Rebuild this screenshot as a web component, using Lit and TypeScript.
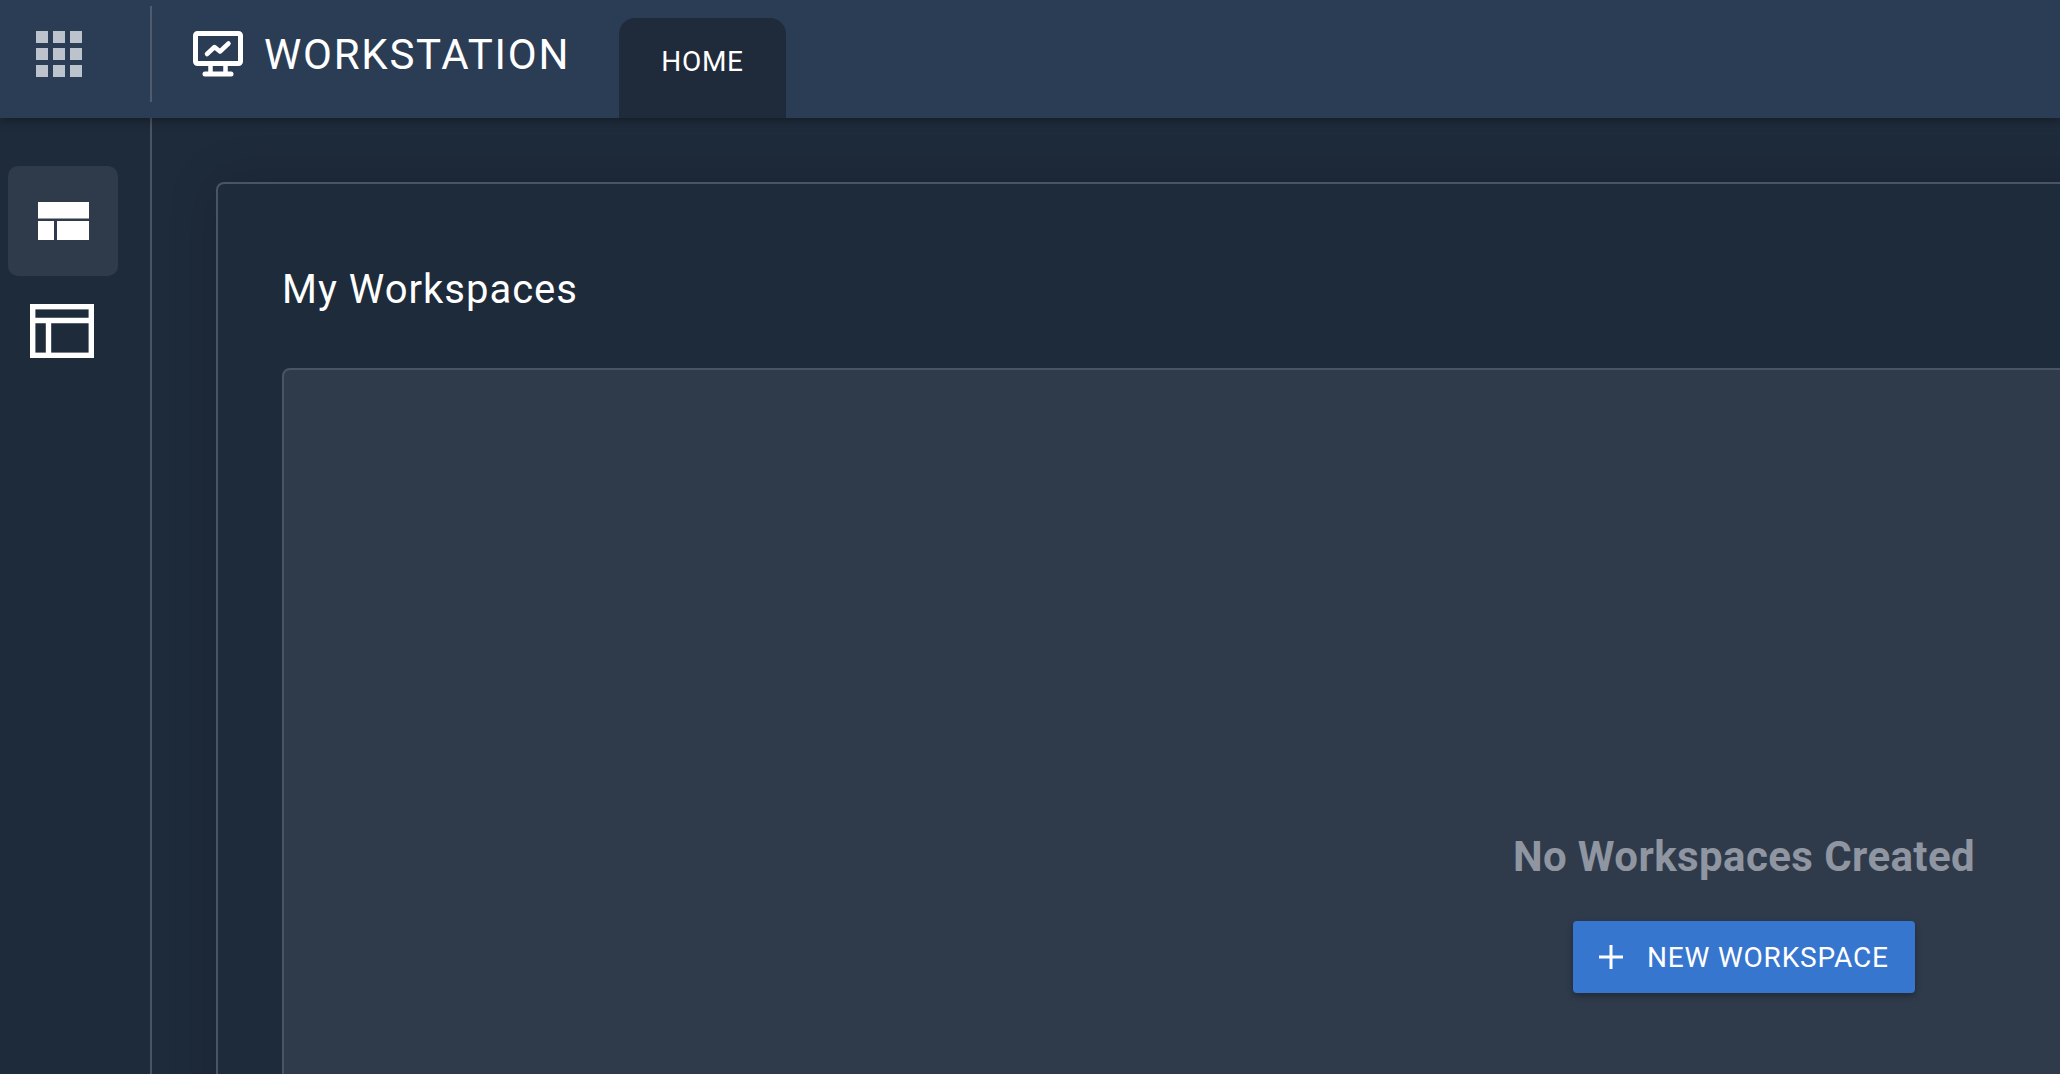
import { LitElement, html, css, svg } from 'lit';
import { customElement } from 'lit/decorators.js';

@customElement('app-root')
export class AppRoot extends LitElement {
  private _renderHeader() {
    return html`
      <header class="header">
        <div class="launcher">
          <svg width="46" height="46" viewBox="0 0 46 46" fill="#bcc3cc">
            ${[0, 17, 34].map(y => [0, 17, 34].map(x => svg`<rect x=${x} y=${y} width="12" height="12"></rect>`))}
          </svg>
        </div>
        <div class="brand">
          <svg class="brand-icon" width="50" height="46" viewBox="0 0 50 46" fill="none" stroke="#fff" stroke-width="5" stroke-linecap="round" stroke-linejoin="round">
            <rect x="2.500" y="2.500" width="45" height="30" rx="2"></rect>
            <path d="M17.500 35v7M32.500 35v7" stroke-width="4.500"></path>
            <path d="M12 43h26"></path>
            <path d="M14 23l7.500-7 5.500 4.500 8.500-8" stroke-width="4.500"></path>
          </svg>
          <span class="brand-title">WORKSTATION</span>
        </div>
        <div class="tab">HOME</div>
      </header>
    `;
  }

  private _renderSidebar() {
    return html`
      <nav class="sidebar">
        <button class="nav-item active">
          <svg width="51" height="38" viewBox="0 0 51 38" fill="#fff">
            <rect width="51" height="16.500"></rect>
            <rect y="19" width="16" height="19"></rect>
            <rect x="19" y="19" width="32" height="19"></rect>
          </svg>
        </button>
        <button class="nav-item">
          <svg class="layout-icon" width="64" height="54" viewBox="0 0 64 54" fill="none" stroke="#fff" stroke-width="5.400">
            <rect x="2.700" y="2.700" width="58.600" height="48.600"></rect>
            <path d="M0 16.500h64M18.500 16.500v37"></path>
          </svg>
        </button>
      </nav>
    `;
  }

  override render() {
    return html`
      ${this._renderHeader()}
      <div class="body">
        ${this._renderSidebar()}
        <main class="main">
          <section class="card">
            <h2 class="card-title">My Workspaces</h2>
            <div class="panel">
              <div class="empty-title">No Workspaces Created</div>
              <button class="new-btn">
                <svg width="24" height="24" viewBox="0 0 24 24" stroke="#fff" stroke-width="3"><path d="M12 0v24M0 12h24"></path></svg>
                <span>NEW WORKSPACE</span>
              </button>
            </div>
          </section>
        </main>
      </div>
    `;
  }

  static override styles = css`
    :host {
      display: flex;
      flex-direction: column;
      width: 2060px;
      height: 1074px;
      overflow: hidden;
      background: #1e2b3b;
      color: #fff;
      font-family: Roboto, "Liberation Sans", sans-serif;
    }

    /* Top bar */
    .header {
      flex: none;
      height: 118px;
      display: flex;
      background: #2b3c55;
      box-shadow: 0 2px 10px rgba(0, 0, 0, 0.35);
      position: relative;
      z-index: 2;
    }

    .launcher {
      flex: none;
      width: 150px;
      display: flex;
      align-items: flex-start;
      padding: 31px 0 0 36px;
      box-sizing: border-box;
      position: relative;
    }

    .launcher::after {
      content: '';
      position: absolute;
      right: -2px;
      top: 6px;
      height: 96px;
      width: 2px;
      background: #4f5c6f;
    }

    .brand {
      display: flex;
      align-items: flex-start;
      margin-left: 43px;
      width: 426px;
    }

    .brand-icon {
      margin-top: 31px;
    }

    .brand-title {
      margin: 30px 0 0 21px;
      font-size: 42px;
      line-height: 50px;
      font-weight: 400;
      letter-spacing: 1.75px;
    }

    .tab {
      flex: none;
      align-self: flex-end;
      width: 167px;
      height: 100px;
      box-sizing: border-box;
      padding-top: 24px;
      text-align: center;
      background: #1f2b3b;
      border-radius: 16px 16px 0 0;
      font-size: 28px;
      line-height: 40px;
      letter-spacing: 0.7px;
    }

    /* Body */
    .body {
      flex: 1;
      display: flex;
      min-height: 0;
    }

    .sidebar {
      flex: none;
      width: 152px;
      box-sizing: border-box;
      border-right: 2px solid #4a5563;
      padding: 48px 0 0 8px;
      display: flex;
      flex-direction: column;
    }

    .nav-item {
      width: 110px;
      height: 110px;
      padding: 0;
      border: none;
      background: transparent;
      border-radius: 10px;
      display: flex;
      align-items: center;
      justify-content: center;
    }

    .nav-item.active {
      background: #2f3b4b;
    }

    .layout-icon {
      margin-right: 2px;
    }

    .main {
      flex: 1;
      min-width: 0;
      overflow: hidden;
      padding: 64px 0 0 64px;
    }

    .card {
      width: 3056px;
      height: 1200px;
      box-sizing: border-box;
      border: 2px solid #4a5563;
      border-radius: 8px;
      padding: 82px 64px 0;
      background: #1e2b3b;
      box-shadow: 0 0 50px rgba(0, 0, 0, 0.16);
    }

    .card-title {
      margin: 0 0 54px;
      font-size: 40px;
      line-height: 48px;
      font-weight: 400;
      letter-spacing: 1px;
    }

    .panel {
      height: 900px;
      box-sizing: border-box;
      border: 2px solid #4a5563;
      border-radius: 8px;
      background: #2f3b4b;
      padding-top: 462px;
      display: flex;
      flex-direction: column;
      align-items: center;
    }

    .empty-title {
      font-size: 42px;
      line-height: 50px;
      font-weight: 700;
      color: #8f96a1;
      letter-spacing: 0.4px;
    }

    .new-btn {
      margin-top: 39px;
      width: 342px;
      height: 72px;
      padding: 0 0 0 26px;
      display: flex;
      align-items: center;
      gap: 24px;
      border: none;
      border-radius: 4px;
      background: #3776cf;
      color: #fff;
      font-family: inherit;
      font-size: 28px;
      letter-spacing: 0.8px;
      box-shadow: 0 3px 6px rgba(0, 0, 0, 0.3);
    }
  `;
}
